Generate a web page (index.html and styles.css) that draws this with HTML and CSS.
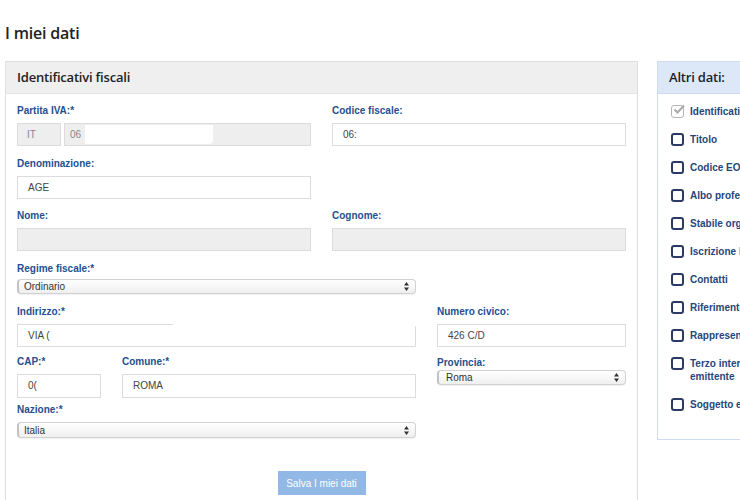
FILE: index.html
```html
<!DOCTYPE html>
<html lang="it">
<head>
<meta charset="utf-8">
<title>I miei dati</title>
<link rel="stylesheet" href="styles.css">
</head>
<body>
<h1 class="page-title">I miei dati</h1>
<div class="layout">
  <section class="panel main-panel">
    <div class="panel-head">Identificativi fiscali</div>
    <form class="form">
      <div class="grid r1">
        <div class="field span-6">
          <label>Partita IVA:*</label>
          <div class="piva">
            <div class="input disabled prefix">IT</div>
            <div class="input disabled grow">06<span class="redact"></span></div>
          </div>
        </div>
        <div class="field span-6">
          <label>Codice fiscale:</label>
          <div class="input">06:</div>
        </div>
      </div>
      <div class="grid r2">
        <div class="field span-6">
          <label>Denominazione:</label>
          <div class="input">AGE</div>
        </div>
      </div>
      <div class="grid r3">
        <div class="field span-6">
          <label>Nome:</label>
          <div class="input disabled"></div>
        </div>
        <div class="field span-6">
          <label>Cognome:</label>
          <div class="input disabled"></div>
        </div>
      </div>
      <div class="grid r4">
        <div class="field span-8">
          <label>Regime fiscale:*</label>
          <div class="select"><span>Ordinario</span>
            <svg class="arrows" width="5" height="9" viewBox="0 0 5 9"><path d="M2.5 0L5 3.5H0Z M2.5 9L5 5.5H0Z" fill="#333"/></svg>
          </div>
        </div>
      </div>
      <div class="grid r5">
        <div class="field span-8">
          <label>Indirizzo:*</label>
          <div class="input">VIA (<span class="strip"></span></div>
        </div>
        <div class="field span-4">
          <label>Numero civico:</label>
          <div class="input">426 C/D</div>
        </div>
      </div>
      <div class="grid r6">
        <div class="field span-2">
          <label>CAP:*</label>
          <div class="input">0(</div>
        </div>
        <div class="field span-6">
          <label>Comune:*</label>
          <div class="input">ROMA</div>
        </div>
        <div class="field span-4">
          <label class="prov-label">Provincia:</label>
          <div class="select prov"><span>Roma</span>
            <svg class="arrows" width="5" height="9" viewBox="0 0 5 9"><path d="M2.5 0L5 3.5H0Z M2.5 9L5 5.5H0Z" fill="#333"/></svg>
          </div>
        </div>
      </div>
      <div class="grid r7">
        <div class="field span-8">
          <label>Nazione:*</label>
          <div class="select nation"><span>Italia</span>
            <svg class="arrows" width="5" height="9" viewBox="0 0 5 9"><path d="M2.5 0L5 3.5H0Z M2.5 9L5 5.5H0Z" fill="#333"/></svg>
          </div>
        </div>
      </div>
      <div class="actions">
        <button type="button" class="btn">Salva I miei dati</button>
      </div>
    </form>
  </section>
  <aside class="panel side-panel">
    <div class="panel-head side-head">Altri dati:</div>
    <ul class="checks">
      <li><span class="box checked"><svg width="13" height="11" viewBox="0 0 13 11"><path d="M2.5 5.5L5.5 8.5L12 1.5" fill="none" stroke="#a9a9a9" stroke-width="2"/></svg></span><span class="txt">Identificativi fiscali</span></li>
      <li><span class="box"></span><span class="txt">Titolo</span></li>
      <li><span class="box"></span><span class="txt">Codice EORI</span></li>
      <li><span class="box"></span><span class="txt">Albo professionale</span></li>
      <li><span class="box"></span><span class="txt">Stabile organizzazione</span></li>
      <li><span class="box"></span><span class="txt">Iscrizione REA</span></li>
      <li><span class="box"></span><span class="txt">Contatti</span></li>
      <li><span class="box"></span><span class="txt">Riferimento amministrazione</span></li>
      <li><span class="box"></span><span class="txt">Rappresentante fiscale</span></li>
      <li><span class="box"></span><span class="txt">Terzo intermediario o soggetto emittente</span></li>
      <li><span class="box"></span><span class="txt">Soggetto emittente</span></li>
    </ul>
  </aside>
</div>
</body>
</html>
```
FILE: styles.css
```css
html, body {
  margin: 0;
  padding: 0;
  overflow: hidden;
  background: #fff;
  height: 500px;
}
body {
  font-family: "Liberation Sans", Arial, sans-serif;
  color: #333;
}
.page-title {
  margin: 0;
  padding: 23px 5px 18px;
  font-family: "Open Sans", sans-serif;
  font-weight: 600;
  font-size: 16px;
  line-height: 20px;
  color: #222;
  letter-spacing: -0.2px;
}
.layout {
  display: flex;
  align-items: flex-start;
  gap: 19px;
  padding-left: 5px;
}
.panel {
  box-sizing: border-box;
  border: 1px solid #dedede;
  flex: none;
}
.main-panel {
  width: 633px;
  min-height: 520px;
}
.panel-head {
  box-sizing: border-box;
  height: 32px;
  line-height: 31px;
  padding-left: 11px;
  background: #efefef;
  border-bottom: 1px solid #e2e2e2;
  font-family: "Open Sans", sans-serif;
  font-weight: 600;
  font-size: 13px;
  color: #222;
  letter-spacing: -0.2px;
}
.form {
  padding: 11px 11px 0;
}
.grid {
  display: grid;
  grid-template-columns: repeat(12, 1fr);
  column-gap: 21px;
}
.span-2 { grid-column: span 2; }
.span-4 { grid-column: span 4; }
.span-6 { grid-column: span 6; }
.span-8 { grid-column: span 8; }
.field label {
  display: block;
  font-size: 10px;
  font-weight: 700;
  line-height: 12px;
  color: #24508f;
  margin-bottom: 6px;
}
.input {
  position: relative;
  box-sizing: border-box;
  height: 23px;
  border: 1px solid #dcdcdc;
  background: #fff;
  padding: 0 10px;
  font-size: 10px;
  line-height: 21px;
  color: #444;
  white-space: nowrap;
}
.input.disabled {
  background: #eeeeee;
  color: #888;
}
.piva {
  display: flex;
  gap: 3px;
}
.prefix {
  width: 44px;
  flex: none;
  padding-left: 9px;
}
.grow {
  flex: 1;
  padding-left: 5px;
}
.redact {
  position: absolute;
  left: 20px;
  top: 1px;
  width: 128px;
  height: 19px;
  background: #fff;
  border-radius: 0 0 4px 0;
}
.strip {
  position: absolute;
  left: 155px;
  right: -1px;
  top: -2px;
  height: 3px;
  background: #fff;
}
.select {
  box-sizing: border-box;
  height: 15px;
  margin-top: -2px;
  border: 1px solid #d2d2d2;
  border-left: 2px solid #c2c2c2;
  border-radius: 4px;
  background: linear-gradient(#ffffff, #efefef);
  display: flex;
  align-items: center;
  justify-content: space-between;
  padding: 0 6px 0 5px;
  font-size: 10px;
  color: #333;
  box-shadow: 0 1px 1px rgba(0,0,0,0.06);
}
.select.prov {
  margin-top: -4px;
  padding-left: 7px;
}
.select.nation {
  height: 16px;
  margin-top: 6px;
}
.r1 { margin-bottom: 12px; }
.r2 { margin-bottom: 11px; }
.r3 { margin-bottom: 12px; }
.r4 { margin-bottom: 12px; }
.r5 { margin-bottom: 9px; }
.r6 { margin-bottom: 6px; }
.r6 .input { height: 24px; line-height: 22px; }
.prov-label { position: relative; top: 1px; }
.actions {
  display: flex;
  justify-content: center;
  margin-top: 33px;
}
.btn {
  width: 88px;
  height: 24px;
  border: none;
  background: #92b9e6;
  color: #fff;
  font-family: "Liberation Sans", Arial, sans-serif;
  font-size: 10px;
  padding: 0;
}
.side-panel {
  width: 240px;
  border-color: #cddcf0;
  padding-bottom: 28px;
}
.side-head {
  background: #dce8f8;
  border-bottom: 1px solid #cddcf0;
}
.checks {
  list-style: none;
  margin: 0;
  padding: 11px 0 0 13px;
}
.checks li {
  display: flex;
  align-items: flex-start;
  gap: 6px;
  margin-bottom: 15px;
  font-size: 10px;
  font-weight: 700;
  line-height: 13px;
  color: #26467a;
}
.checks li:last-child {
  margin-bottom: 0;
}
.txt {
  width: 180px;
}
.box {
  box-sizing: border-box;
  width: 13px;
  height: 13px;
  border: 2px solid #2b3b62;
  border-radius: 3px;
  flex: none;
  position: relative;
}
.box.checked {
  border-color: #b5b5b5;
  border-width: 1.5px;
}
.box.checked svg {
  position: absolute;
  left: 0;
  top: -2px;
}
```
